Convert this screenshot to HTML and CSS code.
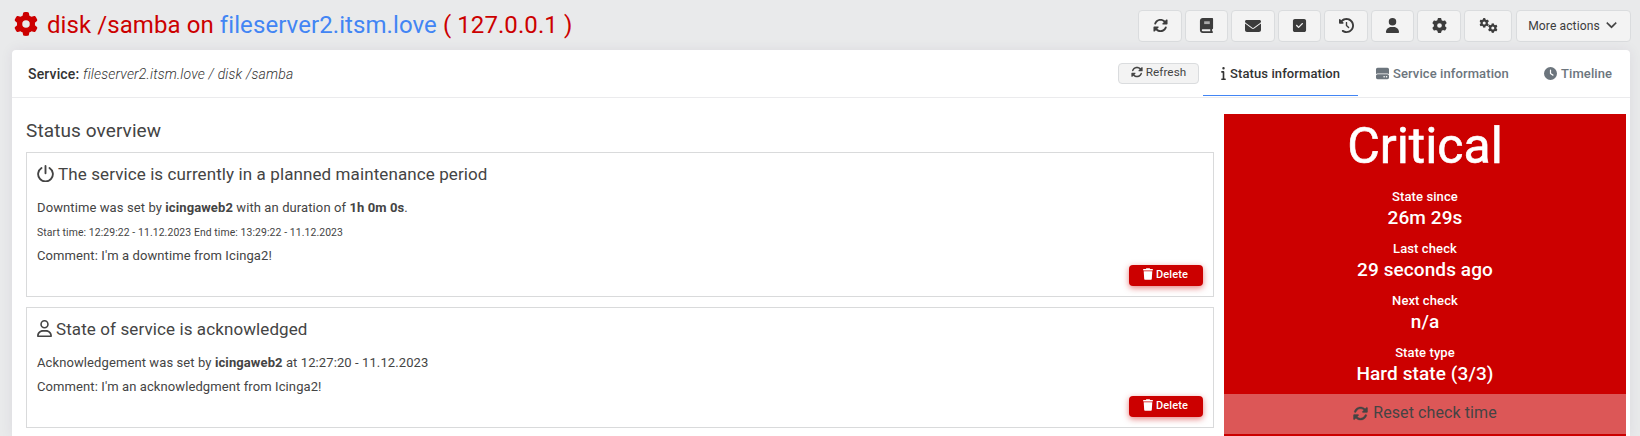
FILE: index.html
```
<!DOCTYPE html>
<html lang="en">
<head>
<meta charset="utf-8">
<title>Service status</title>
<link rel="stylesheet" href="styles.css">
</head>
<body>
<svg class="sprite" aria-hidden="true">
  <symbol id="sync" viewBox="0 0 512 512"><path d="M142.9 142.9c62.2-62.2 162.7-62.5 225.3-1L327 183c-6.9 6.9-8.9 17.2-5.2 26.2s12.5 14.8 22.2 14.8H472c13.3 0 24-10.7 24-24V72c0-9.700-5.800-18.500-14.800-22.200s-19.300-1.700-26.200 5.200L413.400 96.600c-87.600-86.500-228.700-86.200-315.800 1C73.200 122 55.600 150.700 44.800 181.400c-5.900 16.700 2.900 34.900 19.500 40.800s34.900-2.900 40.800-19.500c7.700-21.800 20.200-42.300 37.800-59.800zM16 312V440c0 9.700 5.800 18.500 14.800 22.200s19.300 1.700 26.200-5.200l41.600-41.600c87.600 86.500 228.700 86.200 315.800-1c24.400-24.400 42.100-53.100 52.900-83.700c5.900-16.700-2.900-34.900-19.500-40.800s-34.900 2.900-40.800 19.500c-7.700 21.800-20.200 42.300-37.800 59.800c-62.200 62.200-162.700 62.500-225.300 1L185 329c6.900-6.900 8.900-17.200 5.200-26.200s-12.500-14.800-22.200-14.800H40c-13.300 0-24 10.700-24 24z"/></symbol>
  <symbol id="book" viewBox="0 0 448 512"><path d="M96 0C43 0 0 43 0 96V416c0 53 43 96 96 96H416c17.700 0 32-14.300 32-32s-14.300-32-32-32V384c17.700 0 32-14.300 32-32V32c0-17.700-14.300-32-32-32H96zm0 384H352v64H96c-17.700 0-32-14.300-32-32s14.300-32 32-32z"/><path fill="#aaa" d="M144 112H336V208H144z"/></symbol>
  <symbol id="mail" viewBox="0 0 512 512"><path d="M48 64C21.500 64 0 85.500 0 112c0 15.100 7.100 29.300 19.200 38.400L236.800 313.600c11.400 8.500 27 8.500 38.400 0L492.800 150.400c12.100-9.100 19.200-23.300 19.200-38.400c0-26.500-21.500-48-48-48H48zM0 176V384c0 35.300 28.700 64 64 64H448c35.300 0 64-28.700 64-64V176L294.400 339.200c-22.800 17.100-54 17.100-76.800 0L0 176z"/></symbol>
  <symbol id="check" viewBox="0 0 448 512"><path d="M64 32C28.700 32 0 60.700 0 96V416c0 35.300 28.700 64 64 64H384c35.300 0 64-28.700 64-64V96c0-35.300-28.700-64-64-64H64zM337 209L209 337c-9.400 9.400-24.600 9.400-33.900 0l-64-64c-9.400-9.400-9.400-24.600 0-33.900s24.600-9.400 33.900 0l47 47L303 175c9.400-9.400 24.600-9.400 33.900 0s9.400 24.600 0 33.900z"/></symbol>
  <symbol id="history" viewBox="0 0 512 512"><path d="M75 75L41 41C25.900 25.900 0 36.600 0 57.900V168c0 13.300 10.700 24 24 24H134.100c21.400 0 32.100-25.900 17-41l-30.800-30.800C155 85.500 203 64 256 64c106 0 192 86 192 192s-86 192-192 192c-40.800 0-78.600-12.700-109.700-34.400c-14.500-10.100-34.400-6.600-44.600 7.900s-6.600 34.400 7.900 44.600C151.200 495 201.700 512 256 512c141.400 0 256-114.600 256-256S397.400 0 256 0C185.300 0 121.300 28.700 75 75zm181 53c-13.300 0-24 10.700-24 24V256c0 6.400 2.500 12.500 7 17l72 72c9.400 9.400 24.600 9.400 33.900 0s9.400-24.600 0-33.900l-65-65V152c0-13.300-10.700-24-24-24z"/></symbol>
  <symbol id="user" viewBox="0 0 448 512"><path d="M224 256A128 128 0 1 0 224 0a128 128 0 1 0 0 256zm-45.700 48C79.800 304 0 383.800 0 482.300C0 498.700 13.300 512 29.700 512H418.300c16.400 0 29.700-13.300 29.700-29.700C448 383.800 368.200 304 269.700 304H178.300z"/></symbol>
  <symbol id="user-line" viewBox="0 0 448 512"><path d="M304 128a80 80 0 1 0-160 0 80 80 0 1 0 160 0zM96 128a128 128 0 1 1 256 0A128 128 0 1 1 96 128zM49.300 464H398.700c-8.900-63.300-63.300-112-129-112H178.300c-65.700 0-120.100 48.700-129 112zM0 482.300C0 383.800 79.800 304 178.300 304h91.400C368.200 304 448 383.800 448 482.300c0 16.400-13.300 29.700-29.700 29.700H29.700C13.300 512 0 498.700 0 482.300z"/></symbol>
  <symbol id="cog" viewBox="0 0 512 512"><path d="M495.900 166.600c3.200 8.700 .5 18.400-6.400 24.600l-43.300 39.400c1.100 8.300 1.700 16.800 1.700 25.400s-.6 17.100-1.700 25.400l43.300 39.400c6.900 6.200 9.600 15.900 6.400 24.600c-4.400 11.900-9.700 23.300-15.800 34.300l-4.700 8.100c-6.600 11-14 21.400-22.100 31.200c-5.900 7.200-15.700 9.600-24.500 6.800l-55.700-17.700c-13.400 10.300-28.200 18.900-44 25.400l-12.500 57.100c-2 9.100-9 16.300-18.200 17.800c-13.800 2.300-28 3.500-42.500 3.500s-28.700-1.200-42.500-3.500c-9.200-1.500-16.200-8.700-18.200-17.800l-12.500-57.100c-15.800-6.500-30.600-15.100-44-25.400L83.100 425.900c-8.800 2.800-18.600 .3-24.500-6.800c-8.100-9.800-15.500-20.200-22.100-31.200l-4.700-8.100c-6.100-11-11.400-22.400-15.800-34.300c-3.200-8.700-.5-18.400 6.400-24.600l43.300-39.400C64.600 273.100 64 264.600 64 256s.6-17.100 1.700-25.400L22.400 191.200c-6.900-6.200-9.600-15.900-6.400-24.600c4.400-11.900 9.700-23.300 15.800-34.300l4.700-8.100c6.600-11 14-21.400 22.100-31.200c5.900-7.200 15.700-9.600 24.500-6.800l55.700 17.700c13.400-10.300 28.200-18.900 44-25.400l12.500-57.100c2-9.100 9-16.300 18.200-17.800C227.300 1.200 241.500 0 256 0s28.700 1.200 42.500 3.500c9.200 1.500 16.200 8.700 18.200 17.800l12.500 57.100c15.800 6.500 30.600 15.100 44 25.400l55.700-17.700c8.800-2.800 18.600-.3 24.500 6.800c8.100 9.800 15.500 20.200 22.100 31.200l4.700 8.100c6.100 11 11.400 22.400 15.800 34.300zM256 336a80 80 0 1 0 0-160 80 80 0 1 0 0 160z"/></symbol>
  <symbol id="cogs" viewBox="0 0 640 512"><use href="#cog" x="8" y="4" width="330" height="330"/><use href="#cog" x="302" y="178" width="330" height="330"/></symbol>
  <symbol id="chevron" viewBox="0 0 512 512"><path d="M233.400 406.600c12.500 12.500 32.800 12.500 45.300 0l192-192c12.500-12.500 12.500-32.800 0-45.300s-32.800-12.500-45.300 0L256 338.700 86.600 169.400c-12.500-12.500-32.800-12.500-45.300 0s-12.500 32.800 0 45.300l192 192z"/></symbol>
  <symbol id="info" viewBox="0 0 192 512"><path d="M48 48a48 48 0 1 1 96 0A48 48 0 1 1 48 48zM0 192c0-17.700 14.300-32 32-32H96c17.700 0 32 14.300 32 32V448h32c17.700 0 32 14.300 32 32s-14.300 32-32 32H32c-17.700 0-32-14.300-32-32s14.300-32 32-32H64V224H32c-17.700 0-32-14.300-32-32z"/></symbol>
  <symbol id="drive" viewBox="0 0 512 512"><path d="M0 96C0 60.700 28.700 32 64 32H448c35.300 0 64 28.700 64 64V280.400c-17-15.200-39.400-24.400-64-24.400H64c-24.600 0-47 9.200-64 24.400V96zM64 288H448c35.300 0 64 28.700 64 64v64c0 35.300-28.700 64-64 64H64c-35.300 0-64-28.700-64-64V352c0-35.300 28.700-64 64-64zM320 416a32 32 0 1 0 0-64 32 32 0 1 0 0 64zm128-32a32 32 0 1 0-64 0 32 32 0 1 0 64 0z"/></symbol>
  <symbol id="clock" viewBox="0 0 512 512"><path d="M256 0a256 256 0 1 1 0 512A256 256 0 1 1 256 0zM232 120V256c0 8 4 15.500 10.700 20l96 64c11 7.400 25.900 4.400 33.300-6.700s4.400-25.900-6.700-33.300L280 243.200V120c0-13.300-10.700-24-24-24s-24 10.700-24 24z"/></symbol>
  <symbol id="power" viewBox="0 0 512 512"><path fill="none" stroke="currentColor" stroke-width="56" stroke-linecap="round" d="M256 28V250M135 88A222 222 0 1 0 377 88"/></symbol>
  <symbol id="trash" viewBox="0 0 448 512"><path d="M135.200 17.700L128 32H32C14.300 32 0 46.300 0 64S14.300 96 32 96H416c17.700 0 32-14.300 32-32s-14.300-32-32-32H320l-7.200-14.300C307.400 6.800 296.300 0 284.200 0H163.800c-12.100 0-23.200 6.800-28.600 17.700zM416 128H32L53.200 467c1.600 25.300 22.600 45 47.900 45H346.900c25.300 0 46.300-19.700 47.900-45L416 128z"/></symbol>
</svg>

<header class="top">
  <h1 class="title"><svg class="title-icon"><use href="#cog"/></svg><span>disk /samba on <a class="host">fileserver2.itsm.love</a> ( 127.0.0.1 )</span></h1>
  <nav class="toolbar">
    <button class="tool w44"><svg><use href="#sync"/></svg></button>
    <button class="tool"><svg><use href="#book"/></svg></button>
    <button class="tool w44"><svg class="wide"><use href="#mail"/></svg></button>
    <button class="tool"><svg><use href="#check"/></svg></button>
    <button class="tool w44"><svg><use href="#history"/></svg></button>
    <button class="tool"><svg><use href="#user"/></svg></button>
    <button class="tool w44"><svg><use href="#cog"/></svg></button>
    <button class="tool w48"><svg class="cogs"><use href="#cogs"/></svg></button>
    <button class="tool more">More actions<svg class="caret"><use href="#chevron"/></svg></button>
  </nav>
</header>

<main class="panel">
  <div class="panel-head">
    <div class="crumb"><b>Service:</b> <i>fileserver2.itsm.love / disk /samba</i></div>
    <div class="tabs">
      <button class="refresh"><svg><use href="#sync"/></svg>Refresh</button>
      <a class="tab active"><svg class="info"><use href="#info"/></svg><span>Status information</span></a>
      <a class="tab service"><svg><use href="#drive"/></svg><span>Service information</span></a>
      <a class="tab timeline"><svg><use href="#clock"/></svg><span>Timeline</span></a>
    </div>
  </div>
  <div class="content">
    <section class="overview">
      <h2 class="section-title"><span>Status overview</span></h2>
      <article class="card downtime">
        <h3 class="card-title"><svg class="power"><use href="#power"/></svg><span>The service is currently in a planned maintenance period</span></h3>
        <p class="line"><span>Downtime was set by <b>icingaweb2</b> with an duration of <b>1h 0m 0s</b>.</span></p>
        <p class="line small"><span>Start time: 12:29:22 - 11.12.2023 End time: 13:29:22 - 11.12.2023</span></p>
        <p class="line"><span>Comment: I'm a downtime from Icinga2!</span></p>
        <button class="delete"><svg><use href="#trash"/></svg>Delete</button>
      </article>
      <article class="card ack">
        <h3 class="card-title"><svg class="person"><use href="#user-line"/></svg><span>State of service is acknowledged</span></h3>
        <p class="line"><span>Acknowledgement was set by <b>icingaweb2</b> at 12:27:20 - 11.12.2023</span></p>
        <p class="line"><span>Comment: I'm an acknowledgment from Icinga2!</span></p>
        <button class="delete"><svg><use href="#trash"/></svg>Delete</button>
      </article>
    </section>
    <aside class="state">
      <div class="state-name"><span>Critical</span></div>
      <dl class="facts">
        <div class="fact"><dt>State since</dt><dd>26m 29s</dd></div>
        <div class="fact"><dt>Last check</dt><dd>29 seconds ago</dd></div>
        <div class="fact"><dt>Next check</dt><dd>n/a</dd></div>
        <div class="fact"><dt>State type</dt><dd>Hard state (3/3)</dd></div>
      </dl>
      <button class="reset"><svg><use href="#sync"/></svg>Reset check time</button>
    </aside>
  </div>
</main>
</body>
</html>
```
FILE: styles.css
```
* { box-sizing: border-box; }
body { margin: 0; height: 436px; overflow: hidden; display: flex; flex-direction: column; background: #e9eaeb; color: #444; font: 13px/20px Roboto, "Liberation Sans", sans-serif; letter-spacing: 0.1px; }
svg { fill: currentColor; flex: none; display: block; }
.sprite { width: 0; height: 0; position: absolute; }
button { font: inherit; letter-spacing: inherit; color: inherit; margin: 0; padding: 0; }
h1, h2, h3, p, dl, dd { margin: 0; font-weight: 400; }
b { font-weight: 700; }

.top { height: 50px; flex: none; display: flex; justify-content: space-between; padding: 0 9px 0 14px; }
.title { display: flex; align-items: center; height: 48px; padding-top: 2px; color: #c00; font-size: 24px; line-height: 28px; letter-spacing: 0.08px; }
.title-icon { width: 24px; height: 24px; margin: 0 9px 2px 0; }
.host { color: #4285f4; }
.toolbar { display: flex; gap: 3px; padding-top: 10px; color: #3c3c3c; }
.tool { width: 43px; height: 32px; display: flex; align-items: center; justify-content: center; padding-bottom: 1px; background: #f3f3f3; border: 1px solid #dadcde; border-radius: 4px; }
.tool svg { width: 15px; height: 15px; }
.tool .wide { width: 16px; height: 16px; }
.tool .cogs { width: 19px; height: 15px; }
.w44 { width: 44px; }
.w48 { width: 48px; }
.more { width: 115px; margin-left: 1px; padding-right: 2px; font-size: 12.1px; }
.tool .caret { width: 11px; height: 11px; margin: 0 0 2px 6px; stroke: currentColor; stroke-width: 22px; }

.panel { flex: 1; margin: 0 10px 0 12px; background: #fff; border-radius: 4px 4px 0 0; box-shadow: 0 0 13px rgba(62, 44, 90, .08); }
.panel-head { height: 48px; display: flex; justify-content: space-between; border-bottom: 1px solid #ebebed; }
.crumb { padding: 14px 0 0 16px; color: #333; font-size: 14px; letter-spacing: 0.16px; }
.crumb b { font-weight: 500; }
.crumb i { font-weight: 300; }
.tabs { display: flex; }
.refresh { width: 81px; height: 21px; margin: 13px 4px 0 0; display: flex; align-items: center; justify-content: center; gap: 3px; padding-bottom: 3px; font-size: 11.700px; background: #f3f3f3; border: 1px solid #dadcde; border-radius: 4px; }
.refresh svg { width: 12px; height: 12px; }
.tab { display: flex; align-items: center; gap: 4px; height: 46px; padding-top: 2px; font-weight: 500; color: #6c757d; }
.tab svg { width: 13px; height: 13px; margin-bottom: 1px; }
.tab .info { width: 5px; }
.active { width: 155px; padding-left: 18px; padding-top: 3px; color: #333; border-bottom: 1px solid #4285f4; }
.service { width: 186px; padding-left: 18px; }
.timeline { width: 86px; }

.content { display: flex; gap: 10px; padding: 16px 4px 0 14px; }
.overview { flex: 1; }
.section-title { height: 38px; padding-top: 4px; font-size: 19px; line-height: 26px; }
.card { border: 1px solid #d9dadb; padding: 10px; display: flex; flex-direction: column; }
.downtime { height: 145px; margin-bottom: 10px; }
.ack { height: 121px; }
.card-title { flex: none; display: flex; align-items: center; height: 22px; font-size: 17px; margin-bottom: 11px; }
.power { width: 17px; height: 17px; margin: 0 4px 2px 0; }
.person { width: 15px; height: 17px; margin: 0 4px 1px 0; }
.line { flex: none; height: 24px; line-height: 24px; }
.small { font-size: 10.4px; padding-top: 1px; }
.delete { align-self: flex-end; width: 74px; height: 21px; flex: none; margin-top: -3px; display: flex; align-items: center; justify-content: center; gap: 3px; padding: 0 1px 2px 0; font-size: 11px; font-weight: 500; color: #fff; background: #c00; border: 0; border-radius: 4px; box-shadow: 0 2px 6px rgba(204, 0, 0, .5); }
.delete svg { width: 10px; height: 12px; margin-bottom: 1px; }

.state { width: 402px; height: 322px; background: #c00; color: #fff; text-align: center; }
.state-name { height: 72px; padding-top: 2px; font-size: 50px; line-height: 60px; letter-spacing: 0; -webkit-text-stroke: 0.6px #fff; }
.fact { height: 52px; padding-top: 1px; }
.fact dt { font-weight: 500; line-height: 20px; }
.fact dd { font-size: 19px; line-height: 22px; font-weight: 500; }
.reset { width: 100%; height: 40px; display: flex; align-items: center; justify-content: center; gap: 5px; padding-bottom: 2px; font-size: 16px; color: #444; background: #dc5757; border: 0; }
.reset svg { width: 15px; height: 15px; stroke: currentColor; stroke-width: 12px; }
```
